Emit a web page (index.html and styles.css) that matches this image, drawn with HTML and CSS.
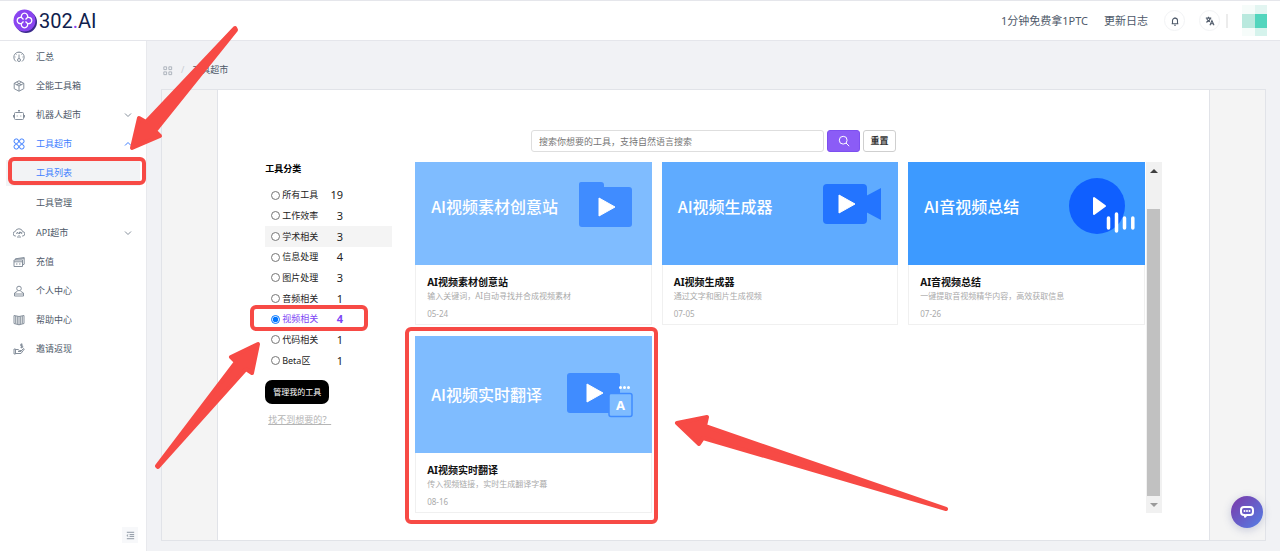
FILE: index.html
```html
<!DOCTYPE html>
<html lang="zh-CN">
<head>
<meta charset="utf-8">
<title>302.AI 工具超市</title>
<link rel="stylesheet" href="styles.css">
</head>
<body>
<header class="topbar">
  <a class="logo" href="#">
    <svg class="logo-mark" viewBox="0 0 24 24" aria-hidden="true">
      <circle cx="13" cy="13" r="11" fill="#3b2a8c"/>
      <circle cx="11.500" cy="11.500" r="11" fill="#8a45f0"/>
      <path d="M8.500 8.500a3.200 3.200 0 1 1 6 0a3.200 3.200 0 1 1 0 6a3.200 3.200 0 1 1-6 0a3.200 3.200 0 1 1 0-6zM8.500 8.500l2 2M14.500 8.500l-2 2M14.500 14.500l-2-2M8.500 14.500l2-2" fill="none" stroke="#fff" stroke-width="1.300"/>
    </svg>
    <span class="logo-text">302<span class="logo-dot">.</span>AI</span>
  </a>
  <nav class="topnav">
    <a href="#">1分钟免费拿1PTC</a>
    <a href="#">更新日志</a>
    <button class="round" aria-label="通知">
      <svg viewBox="0 0 12 12" class="i"><path d="M2 9.300h8M3 9V5.500a3 3 0 0 1 6 0V9M6 2.500V1.500M5 11h2"/></svg>
    </button>
    <button class="round" aria-label="语言">
      <svg viewBox="0 0 12 12" class="i"><path d="M1 2.500h6.500M4.200 1v1.500M6.500 2.500C6 5 4 6.500 1.500 7.500M2.200 3.500C3 5 4.500 6.500 6 7M6 11l2.300-5.500L10.800 11M6.800 9.300H10"/></svg>
    </button>
    <svg class="avatar" viewBox="0 0 42 31" aria-hidden="true">
      <path fill="#ececec" d="M1 9h2v14H1z"/>
      <path fill="#f6fcfa" d="M17 0h13v9H17zM17 23h13v8H17z"/>
      <path fill="#e2f5f1" d="M30 0h12v9H30z"/>
      <path fill="#b9e9de" d="M17 9h13v14H17z"/>
      <path fill="#52d5bd" d="M30 9h12v14H30z"/>
      <path fill="#d5f3ec" d="M30 23h12v8H30z"/>
    </svg>
  </nav>
</header>

<div class="layout">
  <aside class="sidebar">
    <ul class="menu">
      <li><a href="#"><svg viewBox="0 0 12 12" class="i"><path d="M3 10.500A5.200 5.200 0 1 1 9 10.500M6 3.500v4M6 1v1M1.500 6h1M9.500 6h1M2.800 2.800l.7.700M9.200 2.800l-.7.700"/><circle cx="6" cy="9" r="1.500"/></svg>汇总</a></li>
      <li><a href="#"><svg viewBox="0 0 12 12" class="i"><path d="M6 .8l4.800 2.500v5.400L6 11.200 1.200 8.700V3.300zM1.200 3.300L6 6l4.800-2.700M6 6v5.200M3.500 2.200L8.300 5M8.500 2.200L3.700 5"/></svg>全能工具箱</a></li>
      <li><a href="#"><svg viewBox="0 0 12 12" class="i"><path d="M2.500 3.500h7a1 1 0 0 1 1 1v5a1 1 0 0 1-1 1h-7a1 1 0 0 1-1-1v-5a1 1 0 0 1 1-1zM6 3.500v-2M5 1.500h2M.5 6v2.500M11.500 6v2.500M4.200 6.500v1M7.800 6.500v1"/></svg>机器人超市<svg viewBox="0 0 8 8" class="i chev"><path d="M1 2.500l3 3 3-3"/></svg></a></li>
      <li><a href="#" class="on"><svg viewBox="0 0 12 12" class="i"><circle cx="3.300" cy="3.200" r="2.300"/><circle cx="8.800" cy="3.200" r="2.300"/><circle cx="3.300" cy="8.800" r="2.300"/><circle cx="8.800" cy="8.800" r="2.300"/></svg>工具超市<svg viewBox="0 0 8 8" class="i chev"><path d="M1 5.500l3-3 3 3"/></svg></a>
        <ul class="submenu">
          <li><a href="#" class="on current">工具列表</a></li>
          <li><a href="#">工具管理</a></li>
        </ul>
      </li>
      <li><a href="#"><svg viewBox="0 0 12 12" class="i"><path d="M3 9H2.500a2.200 2.200 0 0 1-.3-4.400 3.900 3.900 0 0 1 7.500 0A2.200 2.200 0 0 1 9.500 9H9M3.500 7l1-2 1 2M6.500 7V5h1v1h-1M8.700 5v2M6 8v3M4.500 9.500v1M7.500 9.500v1"/></svg>API超市<svg viewBox="0 0 8 8" class="i chev"><path d="M1 2.500l3 3 3-3"/></svg></a></li>
      <li><a href="#"><svg viewBox="0 0 12 12" class="i"><path d="M1 4h8.500v6.500H1zM1 5.800h8.500M3 8h1.500M6 8h1.500M2.500 4V2.800l8.700-1.300v6.700L9.500 9M2.500 3l8.700-.3"/></svg>充值</a></li>
      <li><a href="#"><svg viewBox="0 0 12 12" class="i"><circle cx="6" cy="3.500" r="2.300"/><path d="M4.500 6.200L1.500 8v3h9V8l-3-1.800M1.500 9h9"/></svg>个人中心</a></li>
      <li><a href="#"><svg viewBox="0 0 12 12" class="i"><path d="M6 2.500v8.300M6 2.500L1 1.500v8l5 1.300 5-1.300v-8zM2.700 2v7.700M4.300 2.300V10M7.700 2.300V10M9.300 2v7.700"/></svg>帮助中心</a></li>
      <li><a href="#"><svg viewBox="0 0 12 12" class="i"><path d="M1 6h1.500v5H1zM2.500 6.500H5l1.500 1H8v1H5M8 8l2.500-2.500.8.500L8 10.500H2.500M9.500 1.300H7.700v1.500h2v1.600H7.500M8.600.5v4.800"/></svg>邀请返现</a></li>
    </ul>
    <button class="collapse" aria-label="收起菜单">
      <svg viewBox="0 0 12 12" class="i"><path d="M2 2.500h8M5 5h5M5 7h5M2 9.500h8M3.500 5L2 6l1.500 1"/></svg>
    </button>
  </aside>

  <main class="main">
    <nav class="crumbs" aria-label="路径">
      <svg viewBox="0 0 12 12" class="i"><path d="M2 2h3v3H2zM7.500 2h3v3h-3zM2 7.500h3v3H2zM7.500 7.500h3v3h-3z"/></svg>
      <span class="slash">/</span>
      <span>工具超市</span>
    </nav>
    <div class="frame">
      <section class="panel">
        <form class="search">
          <input type="text" aria-label="搜索工具" placeholder="搜索你想要的工具，支持自然语言搜索">
          <button class="go" type="button" aria-label="搜索">
            <svg viewBox="0 0 12 12" class="i"><circle cx="5.200" cy="5.200" r="3.900"/><path d="M8 8l3.200 3.200"/></svg>
          </button>
          <button class="reset" type="button">重置</button>
        </form>
        <div class="body">
          <div class="filters">
            <h2>工具分类</h2>
            <div class="options">
              <label><input type="radio" name="cat"><span>所有工具</span><b>19</b></label>
              <label><input type="radio" name="cat"><span>工作效率</span><b>3</b></label>
              <label class="hover"><input type="radio" name="cat"><span>学术相关</span><b>3</b></label>
              <label><input type="radio" name="cat"><span>信息处理</span><b>4</b></label>
              <label><input type="radio" name="cat"><span>图片处理</span><b>3</b></label>
              <label><input type="radio" name="cat"><span>音频相关</span><b>1</b></label>
              <label class="picked"><input type="radio" name="cat" checked><span>视频相关</span><b>4</b></label>
              <label><input type="radio" name="cat"><span>代码相关</span><b>1</b></label>
              <label><input type="radio" name="cat"><span>Beta区</span><b>1</b></label>
            </div>
            <button class="manage" type="button">管理我的工具</button>
            <a class="missing" href="#">找不到想要的？</a>
          </div>
          <div class="results">
            <div class="cards">
              <article class="card">
                <div class="banner sky"><span>AI视频素材创意站</span>
                  <svg viewBox="0 0 80 60"><path fill="#408cff" d="M17 6h20q3 0 3 3v2h25q3 0 3 3v34q0 3-3 3H18q-3 0-3-3V8q0-2 2-2z"/><path fill="#fff" stroke="#fff" stroke-linejoin="round" d="M35 22v18l16-9z"/></svg>
                </div>
                <div class="info"><h3>AI视频素材创意站</h3><p>输入关键词，AI自动寻找并合成视频素材</p><time>05-24</time></div>
              </article>
              <article class="card">
                <div class="banner azure"><span>AI视频生成器</span>
                  <svg viewBox="0 0 80 60"><rect x="13" y="8" width="44" height="40" rx="4" fill="#2374ff"/><path fill="#2374ff" d="M56 20l15-8v32l-15-8z"/><path fill="#fff" stroke="#fff" stroke-linejoin="round" d="M29 19v18l16-9z"/></svg>
                </div>
                <div class="info"><h3>AI视频生成器</h3><p>通过文字和图片生成视频</p><time>07-05</time></div>
              </article>
              <article class="card">
                <div class="banner blue"><span>AI音视频总结</span>
                  <svg viewBox="0 0 80 60"><circle cx="40" cy="30" r="28" fill="#0f5fff"/><path fill="#fff" stroke="#fff" stroke-width="2" stroke-linejoin="round" d="M37 22v16l11-8z"/><path stroke="#fff" stroke-width="3.500" stroke-linecap="round" d="M51.500 42v10M59.500 38v17M67.500 42v10M75.800 42v10"/></svg>
                </div>
                <div class="info"><h3>AI音视频总结</h3><p>一键提取音视频精华内容，高效获取信息</p><time>07-26</time></div>
              </article>
              <article class="card">
                <div class="banner sky"><span>AI视频实时翻译</span>
                  <svg viewBox="0 0 80 60"><rect x="3" y="9" width="53" height="40" rx="3" fill="#408cff"/><path fill="#fff" stroke="#fff" stroke-linejoin="round" d="M23 20v18l16-9z"/><rect x="45" y="29.500" width="23" height="23" rx="2" fill="#7fbcff" stroke="#408cff" stroke-width="1.500"/><path stroke="#fff" stroke-width="3" stroke-linecap="round" d="M56.500 23.500h0M60.500 23.500h0M64.500 23.500h0"/><text x="56.500" y="46" class="glyph">A</text></svg>
                </div>
                <div class="info"><h3>AI视频实时翻译</h3><p>传入视频链接，实时生成翻译字幕</p><time>08-16</time></div>
              </article>
            </div>
            <div class="scrollbar" aria-hidden="true">
              <svg viewBox="0 0 16 16"><path fill="#404040" d="M4 11l4-4 4 4z"/></svg>
              <div class="thumb"></div>
              <svg viewBox="0 0 16 16"><path fill="#9a9a9a" d="M4 6l4 4 4-4z"/></svg>
            </div>
          </div>
        </div>
      </section>
    </div>
  </main>
</div>

<button class="chat" aria-label="客服">
  <svg viewBox="0 0 16 16"><path d="M5 3h6a3 3 0 0 1 3 3v2a3 3 0 0 1-3 3H7.500L6 12.800V11H5A3 3 0 0 1 2 8V6A3 3 0 0 1 5 3z" fill="none" stroke="#fff" stroke-width="2" stroke-linejoin="round"/><path d="M5.500 7h0M8 7h0M10.500 7h0" stroke="#fff" stroke-width="2" stroke-linecap="round"/></svg>
</button>

<svg class="marks" viewBox="0 0 1280 551" aria-hidden="true">
  <g fill="none" stroke="#f74a45" stroke-width="4">
    <rect x="10" y="159" width="134" height="24" rx="4"/>
    <rect x="252" y="307" width="114" height="22" rx="4"/>
    <rect x="407" y="329" width="249" height="193" rx="4"/>
  </g>
  <g fill="#f74a45" stroke="#f74a45" stroke-width="4" stroke-linejoin="round">
    <path d="M235 28L146 122l-7-4-7 30 28-12-5-5L236 30z"/>
    <path d="M157 466l79-104-5-5 27-13-6 29-6-4L158 467z"/>
    <path d="M677 423l30-6-2 9 241 83-243-71-4 6z"/>
  </g>
</svg>
</body>
</html>
```
FILE: styles.css
```css
* { box-sizing: border-box; }

body {
  margin: 0;
  height: 100vh;
  display: flex;
  flex-direction: column;
  font: 9px/14px "Noto Sans", "Noto Sans CJK SC", sans-serif;
  color: #4e5969;
  background: #f1f2f5;
}

a { color: inherit; text-decoration: none; }
button, input { font: inherit; margin: 0; padding: 0; }
ul { list-style: none; margin: 0; padding: 0; }
h2, h3, p { margin: 0; }

.i {
  width: 12px;
  height: 12px;
  flex: none;
  fill: none;
  stroke: currentColor;
  stroke-width: 1;
}

/* Header */
.topbar {
  height: 41px;
  flex: none;
  display: flex;
  align-items: center;
  justify-content: space-between;
  padding: 0 13px;
  background: #fff;
  border-top: 1px solid #e5e6eb;
  border-bottom: 1px solid #e5e6eb;
}
.logo { display: flex; align-items: center; gap: 2px; }
.logo-mark { width: 24px; height: 24px; }
.logo-text { font: 400 20px/24px Roboto, sans-serif; color: #10214d; }
.logo-dot { color: #8a45f0; }
.topnav { display: flex; align-items: center; font-size: 11px; }
.topnav a { margin-right: 16px; }
.round {
  width: 21px;
  height: 21px;
  margin-right: 14px;
  display: grid;
  place-items: center;
  border: 1px solid #f2f3f5;
  border-radius: 50%;
  background: #fff;
  color: #4e5969;
}
.round .i { width: 10px; height: 10px; stroke-width: 1.3; }
.round + .round { margin-right: 5px; }
.avatar { width: 42px; height: 31px; }

/* Sidebar */
.layout { flex: 1; min-height: 0; display: flex; }
.sidebar {
  width: 147px;
  flex: none;
  display: flex;
  flex-direction: column;
  justify-content: space-between;
  padding: 1px 6px 8px;
  background: #fff;
  border-right: 1px solid #e8e9ed;
}
.menu a {
  height: 29px;
  display: flex;
  align-items: center;
  gap: 11px;
  padding: 0 8px 0 7px;
}
.menu .i { color: #86909c; }
.menu .chev { width: 8px; height: 8px; margin-left: auto; }
.menu a.on, .menu .on .i { color: #4080ff; }
.submenu li { padding: 2px 0; }
.submenu a { height: 26px; padding-left: 30px; }
.submenu .current { background: #f2f3f5; }
.collapse {
  width: 16px;
  height: 16px;
  align-self: flex-end;
  display: grid;
  place-items: center;
  border: 0;
  background: #f7f8fa;
  color: #86909c;
  margin-right: 2px;
}
.collapse .i { width: 11px; height: 11px; }

/* Main area */
.main {
  flex: 1;
  min-width: 0;
  display: flex;
  flex-direction: column;
  padding: 22px 14px 10px;
}
.crumbs {
  display: flex;
  align-items: center;
  gap: 8px;
  margin-bottom: 12px;
  padding-left: 1px;
}
.crumbs .i { width: 11px; height: 11px; color: #a9afb9; }
.slash { color: #c9cdd4; }
.frame {
  flex: 1;
  min-height: 0;
  display: flex;
  justify-content: center;
  background: #f4f4f4;
  border: 1px solid #e1e3e8;
}
.panel {
  width: 90%;
  display: flex;
  flex-direction: column;
  padding: 40px 47px 27px;
  background: #fff;
  border: 1px solid #e1e3e8;
  border-width: 0 1px;
}

/* Search row */
.search { display: flex; justify-content: center; gap: 3px; margin-bottom: 10px; }
.search input {
  width: 293px;
  height: 22px;
  padding: 0 7px;
  border: 1px solid #dedede;
  border-radius: 3px;
}
.search input::placeholder { color: #757575; }
.search button { width: 33px; display: grid; place-items: center; border-radius: 3px; }
.go { border: 1px solid #7d4ff0; background: #8b5cf6; color: #fff; }
.reset { border: 1px solid #cfcfcf; background: #fff; color: #333; font-weight: 700; }

/* Filters */
.body { flex: 1; min-height: 0; display: flex; gap: 23px; }
.filters { width: 127px; flex: none; color: #222; }
.filters h2 { font-size: 9px; line-height: 14px; margin-bottom: 9px; color: #000; }
.options { min-height: 186px; display: grid; grid-auto-rows: 1fr; }
.options label { display: flex; align-items: center; padding: 0 49px 0 6px; gap: 2px; }
.options input { width: 9px; height: 9px; }
.options span { flex: 1; }
.options b { font-size: 11px; font-weight: 400; }
.options .hover { background: #f4f4f4; }
.options .picked { color: #7c45f5; }
.options .picked b { font-weight: 700; }
.manage {
  display: block;
  height: 24px;
  padding: 0 8px;
  margin: 9px 0;
  border: 0;
  border-radius: 7px;
  background: #000;
  color: #fff;
  font-size: 8px;
}
.missing { margin-left: 3px; color: #b5b5b5; text-decoration: underline; }

/* Results */
.results { flex: 1; min-width: 0; display: flex; gap: 1px; }
.cards {
  flex: 1;
  min-width: 0;
  overflow: hidden;
  display: grid;
  grid-template-columns: repeat(3, 1fr);
  align-content: end;
  gap: 11px 10px;
}
.banner {
  height: 117px;
  display: flex;
  align-items: center;
  justify-content: space-between;
  padding: 0 8px 2px 16px;
  color: #fff;
  font: 500 16px/24px "Noto Sans CJK SC", sans-serif;
  white-space: nowrap;
}
.banner svg { width: 80px; height: 60px; flex: none; margin-left: -8px; }
.sky { background: #7fbcff; }
.azure { background: #5fabff; }
.blue { background: #3d9aff; }
.glyph { font: 700 13px "Noto Sans", sans-serif; fill: #fff; text-anchor: middle; }
.info {
  padding: 10px 11px 3px;
  border: 1px solid #f0f0f0;
  border-top: 0;
  font-size: 8px;
  color: #aaa;
}
.info h3 { font-size: 10px; line-height: 14px; color: #111; }
.info time { display: block; margin-top: 4px; }

.scrollbar { width: 16px; display: flex; flex-direction: column; background: #f1f1f1; }
.scrollbar svg { width: 16px; height: 16px; }
.thumb { flex: 1; margin: 31px 2px 1px 1px; background: #c1c1c1; }

/* Floating layers */
.chat {
  position: fixed;
  right: 17px;
  bottom: 23px;
  width: 32px;
  height: 32px;
  display: grid;
  place-items: center;
  border: 0;
  border-radius: 50%;
  background: linear-gradient(135deg, #7c38a8, #5480e6);
  box-shadow: 0 2px 8px rgba(60, 70, 140, 0.25);
}
.chat svg { width: 16px; height: 16px; }
.marks {
  position: absolute;
  top: 0;
  left: 0;
  width: 1280px;
  height: 551px;
  pointer-events: none;
}
```
